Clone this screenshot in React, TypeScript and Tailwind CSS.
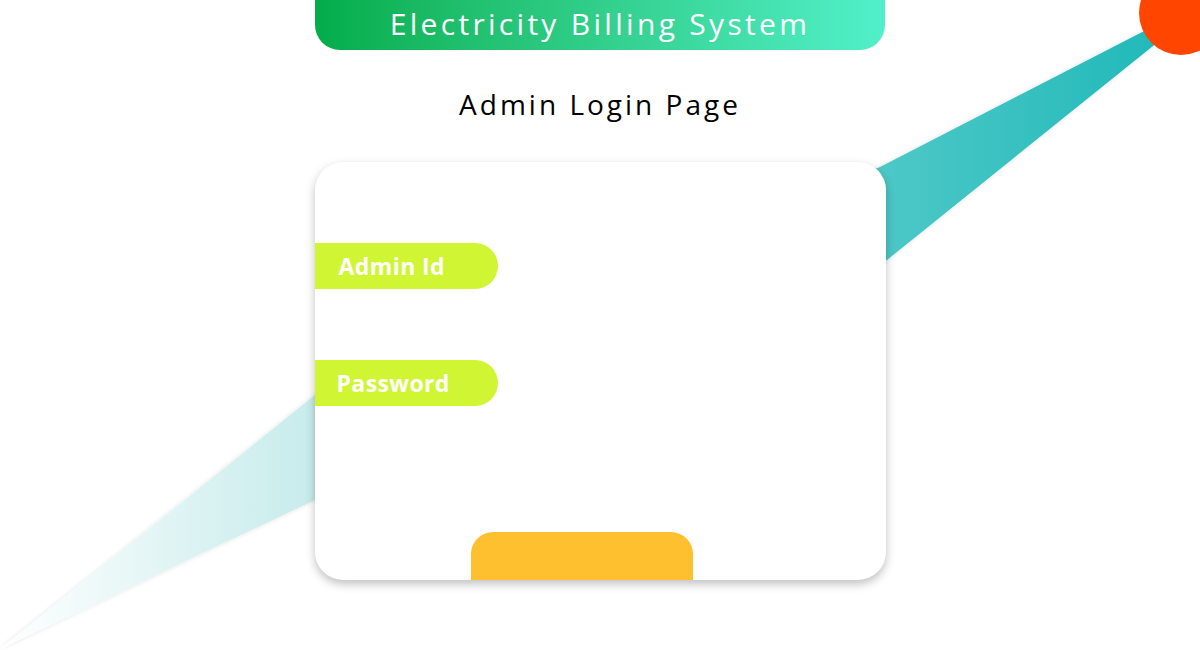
export default function App() {
  return (
    <div className="relative w-[1200px] h-[650px] overflow-hidden bg-white font-['Open_Sans',sans-serif]">
      {/* Decorative streak and dot */}
      <svg className="absolute inset-0" width="1200" height="650" viewBox="0 0 1200 650">
        <defs>
          <linearGradient id="streak" x1="0" y1="0" x2="1180" y2="0" gradientUnits="userSpaceOnUse">
            <stop offset="0" stopColor="#ffffff" />
            <stop offset="0.27" stopColor="#c6ebeb" />
            <stop offset="0.75" stopColor="#4cc8c7" />
            <stop offset="1" stopColor="#1fb8b8" />
          </linearGradient>
          <filter id="soft" x="-10%" y="-10%" width="120%" height="120%">
            <feDropShadow dx="0" dy="0" stdDeviation="2" floodColor="#000" floodOpacity="0.12" />
          </filter>
        </defs>
        <polygon
          points="0,649 315,395 600,280 880,167 1150,28 1158,42 887,260 600,390 315,500"
          fill="url(#streak)"
          filter="url(#soft)"
        />
        <circle cx="1181" cy="13" r="42" fill="#ff4500" />
      </svg>

      <div className="relative flex flex-col items-center">
        <div className="w-[570px] h-[50px] rounded-b-[25px] bg-gradient-to-r from-[#02ad49] to-[#52f0ca] flex items-center justify-center">
          <span className="text-white text-[30px] tracking-[3.3px] leading-none -mt-[3px]">Electricity Billing System</span>
        </div>

        <h1 className="mt-[40px] text-[28px] tracking-[3px] text-black leading-none">Admin Login Page</h1>

        <div className="mt-[44px] w-[571px] h-[418px] bg-white rounded-[28px] shadow-[0_4px_10px_rgba(0,0,0,0.25)] overflow-hidden flex flex-col">
          <div className="mt-[81px] w-[183px] h-[46px] bg-[#d0f533] rounded-r-full flex items-center pl-[24px]">
            <span className="text-white font-bold text-[23px] tracking-[0.4px]">Admin Id</span>
          </div>
          <div className="mt-[71px] w-[183px] h-[46px] bg-[#d0f533] rounded-r-full flex items-center pl-[22px]">
            <span className="text-white font-bold text-[23px] tracking-[0.4px]">Password</span>
          </div>
          <button className="mt-auto ml-[156px] w-[222px] h-[48px] bg-[#ffc02f] rounded-t-[22px]" />
        </div>
      </div>
    </div>
  );
}
